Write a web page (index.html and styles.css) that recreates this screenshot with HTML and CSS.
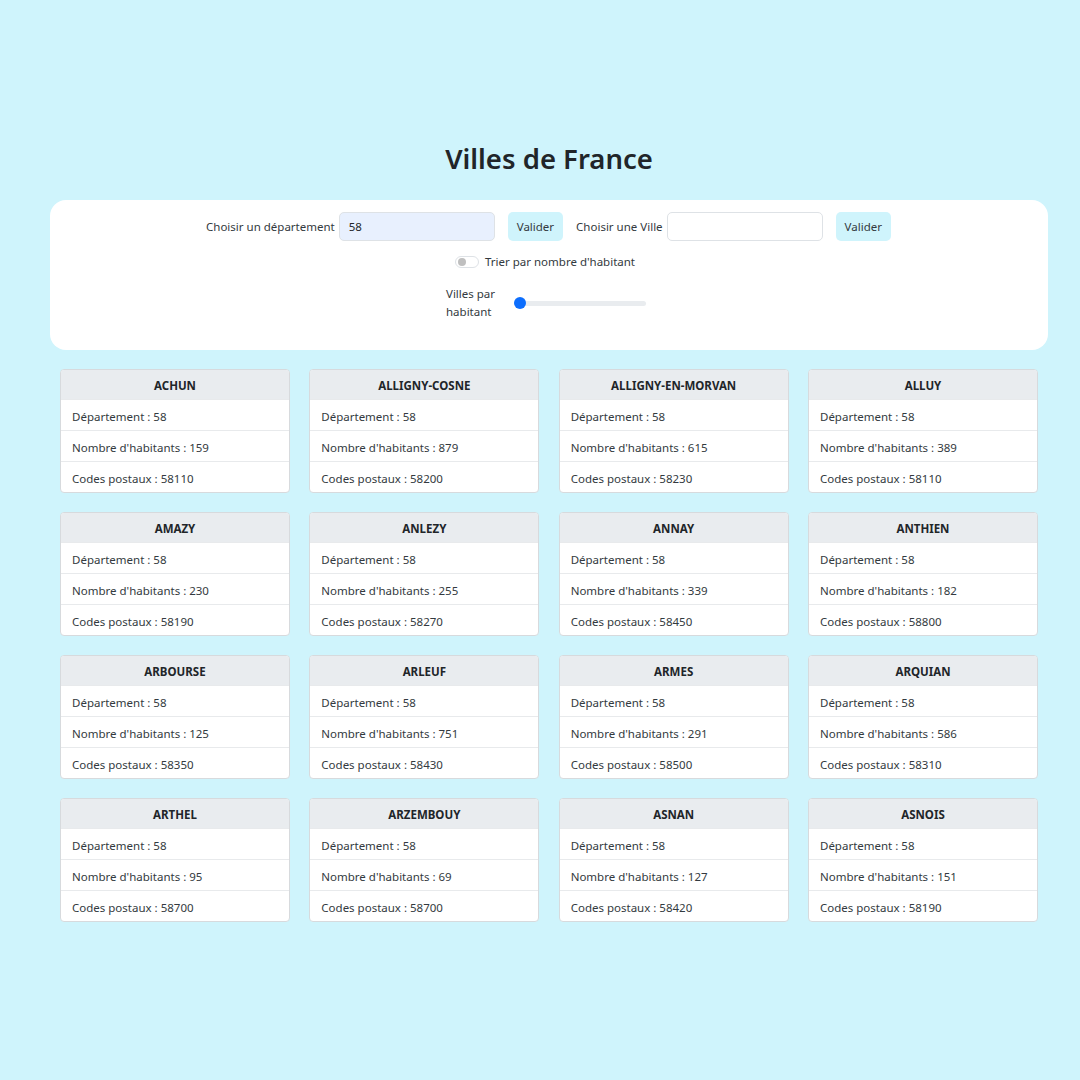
FILE: index.html
```html
<!DOCTYPE html>
<html lang="fr">
<head>
<meta charset="utf-8">
<title>Villes de France</title>
<link rel="stylesheet" href="styles.css">
</head>
<body>
<div class="page">
  <h1 class="title">Villes de France</h1>
  <div class="panel">
    <div class="row-search">
      <label class="lbl">Choisir un département</label>
      <input class="field filled" type="text" value="58">
      <button class="btn">Valider</button>
      <label class="lbl">Choisir une Ville</label>
      <input class="field" type="text" value="">
      <button class="btn">Valider</button>
    </div>
    <div class="row-toggle">
      <span class="switch"><span class="knob"></span></span>
      <span class="lbl">Trier par nombre d'habitant</span>
    </div>
    <div class="row-range">
      <span class="lbl range-lbl">Villes par<br>habitant</span>
      <span class="range"><span class="thumb"></span></span>
    </div>
  </div>
  <div class="grid" id="grid"></div>
</div>
<script>
var data = [
["ACHUN",159,"58110"],["ALLIGNY-COSNE",879,"58200"],["ALLIGNY-EN-MORVAN",615,"58230"],["ALLUY",389,"58110"],
["AMAZY",230,"58190"],["ANLEZY",255,"58270"],["ANNAY",339,"58450"],["ANTHIEN",182,"58800"],
["ARBOURSE",125,"58350"],["ARLEUF",751,"58430"],["ARMES",291,"58500"],["ARQUIAN",586,"58310"],
["ARTHEL",95,"58700"],["ARZEMBOUY",69,"58700"],["ASNAN",127,"58420"],["ASNOIS",151,"58190"]];
var g = document.getElementById('grid');
data.forEach(function(d){
  var c = document.createElement('div');
  c.className = 'card';
  c.innerHTML = '<div class="card-head">'+d[0]+'</div>'+
    '<div class="item">Département : 58</div>'+
    '<div class="item">Nombre d\'habitants : '+d[1]+'</div>'+
    '<div class="item">Codes postaux : '+d[2]+'</div>';
  g.appendChild(c);
});
</script>
</body>
</html>
```
FILE: styles.css
```css
html, body {
  margin: 0;
  padding: 0;
  background: #cff4fc;
  font-family: "Noto Sans", "Open Sans", sans-serif;
  color: #212529;
}
.page {
  width: 998px;
  margin-left: 50px;
  padding-top: 138px;
}
.title {
  margin: 0 0 20px;
  text-align: center;
  font-size: 27.5px;
  font-weight: 600;
  line-height: 42px;
}
.panel {
  background: #fff;
  border-radius: 16px;
  height: 150px;
  box-sizing: border-box;
  padding-top: 11px;
  display: flex;
  flex-direction: column;
  align-items: center;
}
.lbl {
  font-size: 11.5px;
  color: #333a40;
}
.row-search {
  display: flex;
  align-items: center;
  height: 30px;
  margin-left: 12px;
}
.row-search .lbl { margin-right: 4px; }
.field {
  width: 156px;
  height: 29px;
  box-sizing: border-box;
  border: 1px solid #dee2e6;
  border-radius: 5px;
  padding: 0 9px;
  font: inherit;
  font-size: 11.5px;
  color: #212529;
  background: #fff;
  outline: none;
}
.field.filled { background: #e8f0fe; }
.btn {
  margin: 0 13px 0 13px;
  height: 29px;
  padding: 0 9px;
  border: none;
  border-radius: 5px;
  background: #cff4fc;
  font: inherit;
  font-size: 11.5px;
  color: #333a40;
}
.row-toggle {
  display: flex;
  align-items: center;
  margin-top: 13px;
  margin-left: -8px;
  gap: 6px;
}
.switch {
  width: 24px;
  height: 12px;
  box-sizing: border-box;
  border: 1px solid #dee2e6;
  border-radius: 6px;
  display: flex;
  align-items: center;
  padding-left: 2px;
}
.knob {
  width: 8px;
  height: 8px;
  border-radius: 50%;
  background: #bfbfbf;
}
.row-range {
  display: flex;
  align-items: center;
  margin-top: 16px;
  margin-left: -6px;
}
.range-lbl {
  line-height: 18px;
  width: 56px;
}
.range {
  margin-left: 12px;
  width: 132px;
  height: 5px;
  border-radius: 3px;
  background: #e9ecef;
  display: flex;
  align-items: center;
}
.thumb {
  width: 12px;
  height: 12px;
  border-radius: 50%;
  background: #0d6efd;
}
.grid {
  margin: 19px 10px 0;
  display: grid;
  grid-template-columns: repeat(4, 230px);
  column-gap: 19.33px;
  row-gap: 19px;
}
.card {
  background: #fff;
  border: 1px solid #d7dadd;
  border-radius: 4px;
  overflow: hidden;
  font-size: 11.5px;
  color: #333a40;
}
.card-head {
  background: #e9ecef;
  height: 29px;
  line-height: 31px;
  text-align: center;
  font-weight: 700;
  color: #212529;
}
.item {
  height: 30px;
  line-height: 33px;
  padding-left: 11px;
  border-top: 1px solid #e8eaec;
}
```
